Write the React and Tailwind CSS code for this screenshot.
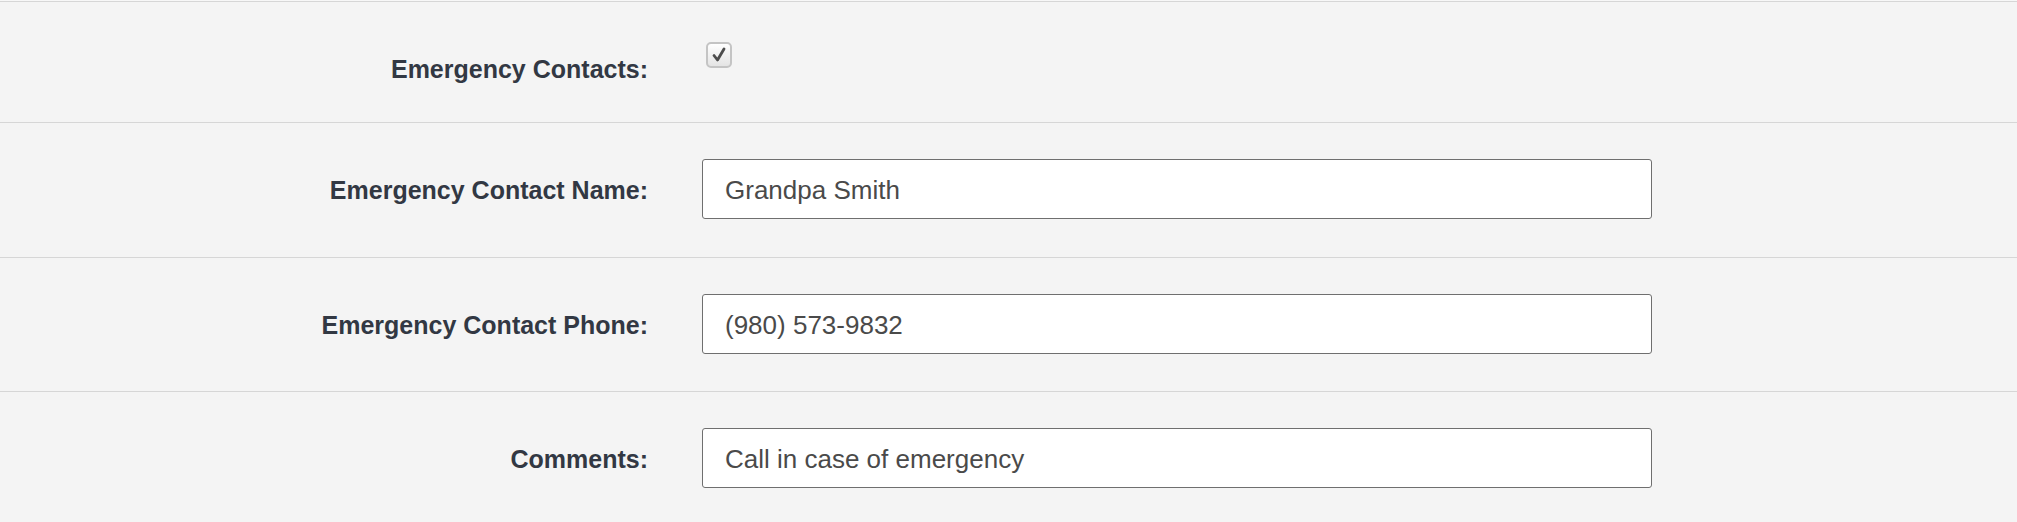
import { useState } from "react";

const fields = [
  { label: "Emergency Contact Name:", value: "Grandpa Smith" },
  { label: "Emergency Contact Phone:", value: "(980) 573-9832" },
  { label: "Comments:", value: "Call in case of emergency" },
];

function Label({ children }) {
  return (
    <div className="w-[648px] shrink-0 h-[60px] pt-1 flex items-center justify-end text-[25px] font-bold text-[#323843] font-['Liberation_Sans',Arial,sans-serif]">
      {children}
    </div>
  );
}

export default function App() {
  const [checked, setChecked] = useState(true);
  const [values, setValues] = useState(fields.map((f) => f.value));

  return (
    <div className="w-[2017px] h-[522px] bg-[#f4f4f4] overflow-hidden">
      <div className="h-px bg-[#f7f7f7]" />

      {/* Emergency contacts toggle */}
      <div className="flex gap-[54px] border-t border-[#d6d6d6] pt-9 pb-6">
        <Label>Emergency Contacts:</Label>
        <div className="pt-1 pl-1">
          <button
            onClick={() => setChecked(!checked)}
            className="w-[26px] h-[26px] rounded-[5px] border-2 border-[#c4c4c4] bg-gradient-to-b from-[#ffffff] to-[#e4e4e4] flex items-center justify-center"
          >
            {checked && (
              <svg width="18" height="18" viewBox="0 0 18 18">
                <path
                  d="M4 9.5 L7.5 14 L14 3"
                  fill="none"
                  stroke="#4d4d4d"
                  strokeWidth="2.8"
                  strokeLinecap="round"
                  strokeLinejoin="round"
                />
              </svg>
            )}
          </button>
        </div>
      </div>

      {fields.map((field, i) => (
        <div
          key={field.label}
          className={`flex gap-[54px] border-t border-[#d6d6d6] pt-9 ${
            i === 0 ? "pb-[38px]" : "pb-[37px]"
          }`}
        >
          <Label>{field.label}</Label>
          <input
            value={values[i]}
            onChange={(e) =>
              setValues(values.map((v, j) => (j === i ? e.target.value : v)))
            }
            className="w-[950px] h-[60px] bg-white border border-[#6f6f6f] rounded-[3px] px-[22px] pt-[2px] text-[26px] text-[#4a4a4a] font-['Liberation_Sans',Arial,sans-serif] outline-none"
          />
        </div>
      ))}
    </div>
  );
}
